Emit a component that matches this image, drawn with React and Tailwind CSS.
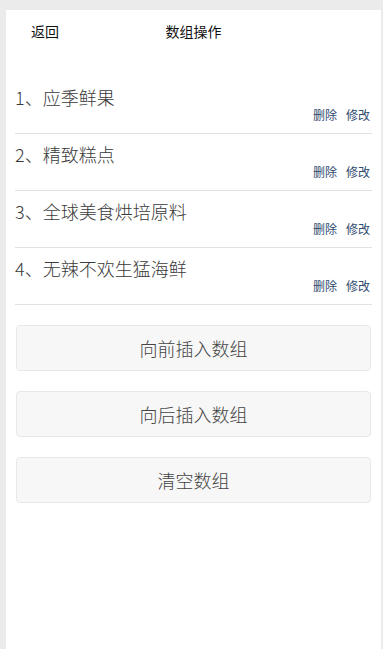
import React from "react";

const items = ["应季鲜果", "精致糕点", "全球美食烘培原料", "无辣不欢生猛海鲜"];
const buttons = ["向前插入数组", "向后插入数组", "清空数组"];

export default function App() {
  return (
    <div className="min-h-[649px] bg-[#ebebeb] pt-[10px] pl-[6px] pr-[2px]" style={{ fontFamily: '"Noto Sans CJK SC", "Noto Sans", sans-serif' }}>
      <div className="min-h-[639px] bg-white flex flex-col">
        <div className="grid grid-cols-3 h-[42px] items-center text-[14px] text-[#111]">
          <div className="pl-[25px]">返回</div>
          <div className="text-center">数组操作</div>
          <div />
        </div>
        <div className="mt-[25px] mx-[9px] flex flex-col">
          {items.map((t, i) => (
            <div key={i} className="border-b border-[#e2e2e2] pt-[9px] pb-[11px]">
              <div className="text-[18px] leading-[22px] text-[#3a3a3a] font-light">{i + 1}、{t}</div>
              <div className="flex justify-end gap-[9px] pr-[2px] text-[12px] leading-[14px] text-[#2f4b70]">
                <span>删除</span>
                <span>修改</span>
              </div>
            </div>
          ))}
        </div>
        <div className="mt-[20px] mx-[10px] flex flex-col gap-[20px]">
          {buttons.map((b) => (
            <div key={b} className="h-[46px] flex items-center justify-center bg-[#f7f7f7] border border-[#e8e8e8] rounded-[4px] text-[18px] text-[#444] font-light">
              {b}
            </div>
          ))}
        </div>
      </div>
    </div>
  );
}
